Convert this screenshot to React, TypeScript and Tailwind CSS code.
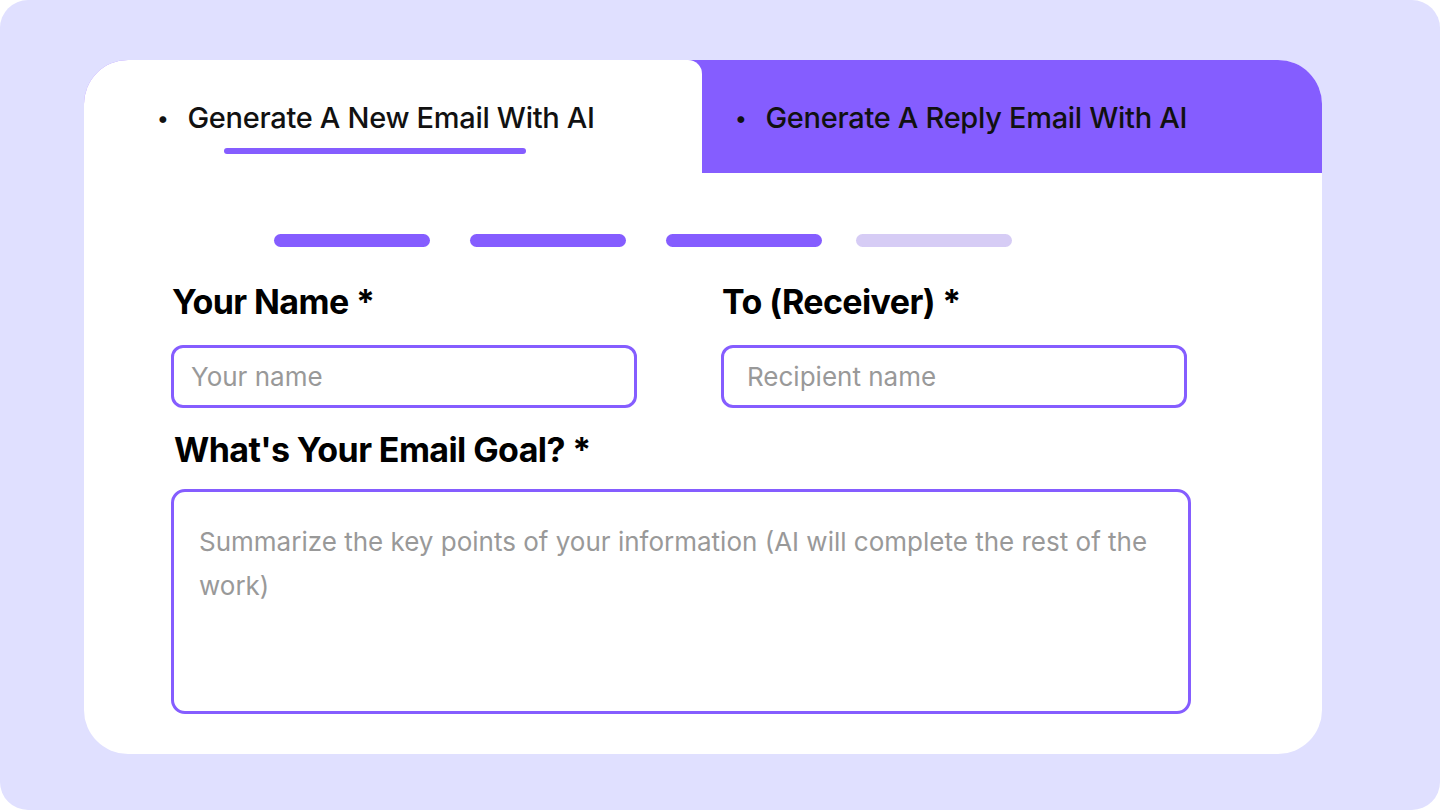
import React from "react";

function Tab({ label, active }: { label: string; active?: boolean }) {
  return (
    <div
      className={
        "flex h-[113px] w-[618px] flex-col pt-[41px] " +
        (active ? "rounded-tr-[14px] bg-white pl-[73px]" : "pl-[33px]")
      }
    >
      <div className="flex h-[34px] items-center gap-[19px] text-[29px] font-medium tracking-[-0.3px] text-[#111]">
        <span className="text-[22px]">•</span>
        <span>{label}</span>
      </div>
      {active && <div className="mt-[13px] ml-[67px] h-[6px] w-[302px] rounded-full bg-[#855dff]" />}
    </div>
  );
}

function Field({ label, placeholder, padded }: { label: string; placeholder: string; padded?: boolean }) {
  return (
    <div className="flex w-[466px] flex-col gap-[22px]">
      <label className="pl-[1px] text-[34px] font-bold tracking-[-0.6px] text-black leading-[42px]">{label}</label>
      <input
        placeholder={placeholder}
        className={
          "box-border h-[63px] rounded-[12px] border-[3px] border-[#855dff] bg-white text-[26px] text-black outline-none placeholder:text-[#999] " +
          (padded ? "px-[23px]" : "px-[17px]")
        }
      />
    </div>
  );
}

export default function App() {
  return (
    <div className="h-[810px] w-[1440px] bg-white" style={{ fontFamily: "Inter, 'Noto Sans', sans-serif" }}>
      <div className="flex h-full w-full rounded-[28px] bg-[#e0e0ff] pl-[84px] pt-[60px]">
        <div className="h-[694px] w-[1238px] overflow-hidden rounded-[44px] bg-white">
          <div className="flex bg-[#855dff]">
            <Tab label="Generate A New Email With AI" active />
            <Tab label="Generate A Reply Email With AI" />
          </div>

          <div className="flex gap-[40px] pl-[190px] pt-[61px]">
            <div className="h-[13px] w-[156px] rounded-full bg-[#855dff]" />
            <div className="h-[13px] w-[156px] rounded-full bg-[#855dff]" />
            <div className="h-[13px] w-[156px] rounded-full bg-[#855dff]" />
            <div className="ml-[-6px] h-[13px] w-[156px] rounded-full bg-[#d6ccf5]" />
          </div>

          <div className="flex gap-[84px] pl-[87px] pt-[34px]">
            <Field label="Your Name *" placeholder="Your name" />
            <Field label="To (Receiver) *" placeholder="Recipient name" padded />
          </div>

          <div className="flex flex-col gap-[18px] pl-[87px] pt-[21px]">
            <label className="pl-[3px] text-[34px] font-bold tracking-[-0.6px] text-black leading-[42px]">
              What's Your Email Goal? *
            </label>
            <textarea
              placeholder="Summarize the key points of your information (AI will complete the rest of the work)"
              className="box-border h-[225px] w-[1020px] resize-none rounded-[14px] border-[3px] border-[#855dff] bg-white px-[25px] pt-[28px] text-[26px] leading-[44px] text-black outline-none placeholder:text-[#999]"
            />
          </div>
        </div>
      </div>
    </div>
  );
}
